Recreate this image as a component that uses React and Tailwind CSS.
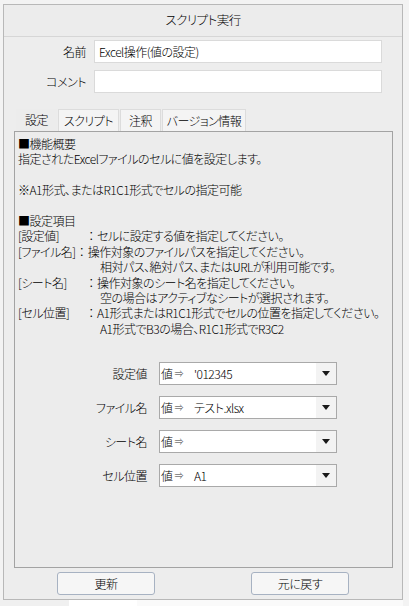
import React from "react";

const font = {
  fontFamily: '"Noto Sans CJK JP", "Noto Sans", sans-serif',
};

function Combo({ value }) {
  return (
    <div className="flex h-[23px] w-[178px] items-stretch border border-[#a9a9a9] bg-white">
      <div className="flex flex-1 items-center text-[12px] text-black">
        <span className="pl-[1px]">値</span>
        <span className="ml-[2px] text-[9px] text-[#333]">⇒</span>
        <span className="ml-[11px]">{value}</span>
      </div>
      <div className="flex w-[20px] items-center justify-center bg-[#f3f3f3]">
        <svg width="8" height="5" viewBox="0 0 8 5">
          <polygon points="0,0 8,0 4,5" fill="#1a1a1a" />
        </svg>
      </div>
    </div>
  );
}

function FormRow({ label, value }) {
  return (
    <div className="flex items-center">
      <div className="w-[144px] pr-[12px] text-right text-[12px] text-black">{label}</div>
      <Combo value={value} />
    </div>
  );
}

function Tab({ children, active, className = "" }) {
  return (
    <div
      className={
        "flex h-[22px] items-center justify-center text-[12px] text-black " +
        (active
          ? "bg-[#ececec]"
          : "border border-b-0 border-[#dcdcdc] bg-[#f4f4f4]") +
        " " +
        className
      }
    >
      {children}
    </div>
  );
}

export default function App() {
  const textLines = [
    { t: "■機能概要" },
    { t: "指定されたExcelファイルのセルに値を設定します。" },
    { t: "" },
    { t: "※A1形式、またはR1C1形式でセルの指定可能" },
    { t: "" },
    { t: "■設定項目" },
    { l: "[設定値]", w: true, t: "セルに設定する値を指定してください。" },
    { l: "[ファイル名]", w: false, t: "操作対象のファイルパスを指定してください。" },
    { c: "相対パス、絶対パス、またはURLが利用可能です。" },
    { l: "[シート名]", w: true, t: "操作対象のシート名を指定してください。" },
    { c: "空の場合はアクティブなシートが選択されます。" },
    { l: "[セル位置]", w: true, t: "A1形式またはR1C1形式でセルの位置を指定してください。" },
    { c: "A1形式でB3の場合、R1C1形式でR3C2" },
  ];

  return (
    <div
      className="h-[606px] w-[409px] overflow-hidden bg-[#f3f3f3] font-light tracking-[-0.5px] text-black [font-feature-settings:'palt']"
      style={font}
    >
      <div className="ml-[3px] mt-[4px] flex h-[596px] w-[400px] flex-col border border-[#b8b8b8] bg-[#ededed]">
        {/* title */}
        <div className="flex h-[32px] shrink-0 items-center justify-center border-b border-[#d6d6d6] bg-[#ececec] text-[12.5px] text-black">
          スクリプト実行
        </div>

        {/* name */}
        <div className="mt-[3px] flex items-center">
          <div className="w-[82px] text-right text-[12px] text-black">名前</div>
          <div className="ml-[8px] flex h-[23px] w-[288px] items-center border border-[#dadada] bg-white pl-[4px] text-[12px] text-black">
            Excel操作(値の設定)
          </div>
        </div>
        <div className="mt-[7px] flex items-center">
          <div className="w-[82px] text-right text-[12px] text-black">コメント</div>
          <div className="ml-[8px] h-[23px] w-[288px] border border-[#dadada] bg-white" />
        </div>

        {/* tabs */}
        <div className="ml-[12px] mt-[16px] flex items-end">
          <Tab active className="w-[41px]">設定</Tab>
          <Tab className="ml-[1px] w-[61px]">スクリプト</Tab>
          <Tab className="ml-[1px] w-[41px]">注釈</Tab>
          <Tab className="ml-[1px] w-[84px]">バージョン情報</Tab>
        </div>

        {/* panel */}
        <div className="ml-[10px] flex h-[437px] w-[379px] flex-col border border-[#a3a3a3] bg-[#ececec]">
          <div className="pl-[3px] pt-[4px] text-[12px] leading-[15.4px] text-black">
            {textLines.map((ln, i) => {
              if (ln.c !== undefined) {
                return (
                  <div key={i} className="h-[15.4px] whitespace-nowrap pl-[82px]">
                    {ln.c}
                  </div>
                );
              }
              if (ln.l !== undefined) {
                return (
                  <div key={i} className="flex h-[15.4px] whitespace-nowrap">
                    <span className={ln.w ? "inline-block w-[67px]" : "inline-block"}>{ln.l}</span>
                    <span className="inline-block w-[12px] text-center [font-feature-settings:normal]">：</span>
                    <span>{ln.t}</span>
                  </div>
                );
              }
              return (
                <div key={i} className="h-[15.4px] whitespace-nowrap">
                  {ln.t}
                </div>
              );
            })}
          </div>

          <div className="mt-[26px] flex flex-col gap-[11px]">
            <FormRow label="設定値" value="'012345" />
            <FormRow label="ファイル名" value="テスト.xlsx" />
            <FormRow label="シート名" value="" />
            <FormRow label="セル位置" value="A1" />
          </div>
        </div>

        {/* buttons */}
        <div className="mt-[4px] flex">
          <button className="ml-[53px] flex h-[23px] w-[98px] items-center justify-center rounded-[3px] border border-[#a7b2c2] bg-[#f6f6f6] text-[12px] text-black">
            更新
          </button>
          <button className="ml-[96px] flex h-[23px] w-[98px] items-center justify-center rounded-[3px] border border-[#a7b2c2] bg-[#f6f6f6] text-[12px] text-black">
            元に戻す
          </button>
        </div>
      </div>
      <div className="flex h-[6px]">
        <div className="w-[69px] bg-[#f0f0f0]" />
        <div className="w-[68px] bg-white" />
        <div className="w-[266px] bg-[#fafafa]" />
      </div>
    </div>
  );
}
